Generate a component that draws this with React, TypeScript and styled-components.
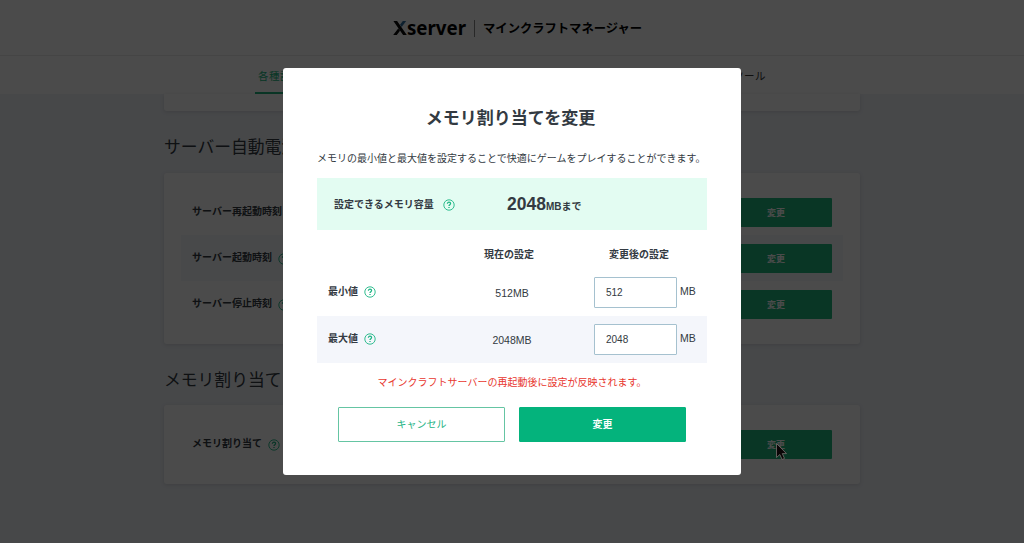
import React from "react";
import styled, { createGlobalStyle } from "styled-components";

const GlobalStyle = createGlobalStyle`
  *, *::before, *::after { box-sizing: border-box; }
  html, body { margin: 0; height: 100%; overflow: hidden; }
  body {
    font-family: "Liberation Sans", "Noto Sans CJK JP", sans-serif;
    font-size: 10px;
    color: #333a42;
    background: #f0f3f8;
  }
  h1, h2, p { margin: 0; }
`;

const Page = styled.div`
  height: 543px;
  overflow: hidden;
  display: flex;
  flex-direction: column;
`;

const Header = styled.header`
  flex: none;
  height: 56px;
  display: flex;
  align-items: center;
  justify-content: center;
  background: #fff;
  border-bottom: 1px solid #e9e9e9;
  color: #000;
`;

const Brand = styled.div`
  display: flex;
  align-items: center;
  margin: 1px 0 0 11px;
`;

const BrandName = styled.span`
  display: flex;
  align-items: center;
  font: bold 18.7px/20px "Noto Sans", sans-serif;
`;

const BrandProduct = styled.span`
  margin-left: 8px;
  padding-left: 8px;
  border-left: 1px solid #888;
  font: 700 12.3px/17px "Noto Sans CJK JP", sans-serif;
  white-space: nowrap;
`;

const Nav = styled.nav`
  flex: none;
  height: 38px;
  background: #fff;
  display: flex;
  justify-content: space-between;
  padding: 0 255px 0 255px;
`;

const Tab = styled.a<{ $active?: boolean }>`
  padding: 0 3px;
  line-height: 40px;
  height: 38px;
  font-size: 10.5px;
  letter-spacing: 0.5px;
  color: ${(p) => (p.$active ? "#21b77f" : "#333")};
  border-bottom: 2px solid ${(p) => (p.$active ? "#21b77f" : "transparent")};
`;

const Main = styled.main`
  width: 696px;
  margin-left: 164px;
`;

const Heading = styled.h2<{ $height: number }>`
  height: ${(p) => p.$height}px;
  padding-top: 25px;
  font-size: 16.8px;
  font-weight: 400;
  line-height: 24px;
`;

const Card = styled.section`
  padding: 16px 17px 17px;
  background: #fff;
  border-radius: 3px;
  box-shadow: 0 1px 4px rgba(0, 0, 0, 0.12);
`;

const ScrolledCard = styled(Card)`
  height: 17px;
  padding: 0;
  border-radius: 0 0 3px 3px;
`;

const SettingRow = styled.div<{ $shaded?: boolean }>`
  height: 46px;
  padding: 0 11px;
  display: flex;
  align-items: center;
  justify-content: space-between;
  background: ${(p) => (p.$shaded ? "#f3f6fb" : "transparent")};
`;

const Label = styled.span<{ $gap?: number }>`
  display: inline-flex;
  align-items: center;
  gap: ${(p) => p.$gap ?? 6}px;
  font-weight: 700;
  line-height: 14px;
  svg { margin-top: 1px; }
`;

const RowButton = styled.button`
  width: 112px;
  height: 29px;
  padding: 0;
  border: 0;
  border-radius: 1px;
  background: #1fb77f;
  color: #fff;
  font: 700 9px/29px "Noto Sans CJK JP", sans-serif;
`;

const Overlay = styled.div`
  position: fixed;
  inset: 0;
  display: flex;
  justify-content: center;
  background: rgba(0, 0, 0, 0.705);
`;

const Dialog = styled.div`
  width: 458px;
  height: 407px;
  margin-top: 68px;
  padding: 39px 34px 0;
  border-radius: 3px;
  background: #fff;
  display: flex;
  flex-direction: column;
`;

const DialogTitle = styled.h1`
  margin-left: -3px;
  font-size: 17px;
  line-height: 24px;
  text-align: center;
`;

const Lead = styled.p`
  margin-top: 21px;
  height: 26px;
  line-height: 14px;
  white-space: nowrap;
`;

const Capacity = styled.div`
  height: 52px;
  padding: 2px 17px 0;
  display: grid;
  grid-template-columns: 173px 1fr;
  align-items: center;
  background: #e3fcf2;
  svg { margin-top: 0; }
`;

const Amount = styled.strong`
  line-height: 20px;
  white-space: nowrap;
  b { font-size: 17.5px; }
`;

const TableHead = styled.div`
  height: 39px;
  padding: 10px 4px 0 11px;
  display: grid;
  grid-template-columns: 115px 132px 1fr;
  align-items: center;
`;

const TableRow = styled.div<{ $shaded?: boolean }>`
  height: 47px;
  padding-left: 11px;
  display: grid;
  grid-template-columns: 118px 132px 1fr;
  align-items: center;
  background: ${(p) => (p.$shaded ? "#f4f6fb" : "transparent")};
  ${Label} { margin-bottom: 2px; }
`;

const Cell = styled.span<{ $head?: boolean }>`
  text-align: center;
  font-size: ${(p) => (p.$head ? "10px" : "10.5px")};
  font-weight: ${(p) => (p.$head ? 700 : 400)};
  line-height: 14px;
`;

const Field = styled.label`
  display: flex;
  align-items: center;
  gap: 3px;
  padding-left: 16px;
  font-size: 10.5px;
`;

const Unit = styled.span`
  margin-bottom: 3px;
`;

const Input = styled.input`
  width: 83px;
  height: 31px;
  padding: 0 11px;
  border: 1px solid #a5c1cf;
  border-radius: 1px;
  background: #fff;
  color: inherit;
  font: 10px "Liberation Sans", sans-serif;
`;

const Notice = styled.p`
  margin-top: 13px;
  line-height: 14px;
  text-align: center;
  white-space: nowrap;
  color: #e8372e;
`;

const Actions = styled.div`
  margin-top: 17px;
  display: flex;
  justify-content: center;
  gap: 14px;
`;

const ActionButton = styled.button<{ $primary?: boolean }>`
  width: 167px;
  height: 35px;
  padding: 0 0 2px;
  border: 1px solid ${(p) => (p.$primary ? "#04b37c" : "#65c5a3")};
  border-radius: 1px;
  background: ${(p) => (p.$primary ? "#04b37c" : "#fff")};
  color: ${(p) => (p.$primary ? "#fff" : "#24b384")};
  font: ${(p) => (p.$primary ? 700 : 400)} 10px/31px "Noto Sans CJK JP", sans-serif;
`;

const Pointer = styled.svg`
  position: fixed;
  left: 775px;
  top: 442px;
`;

const Help = () => (
  <svg width="12" height="12" viewBox="0 0 12 12" fill="none" stroke="#1bb583">
    <circle cx="6" cy="6" r="5.2" strokeWidth="0.9" />
    <path d="M4.4 4.8C4.4 3.8 5.1 3.2 6 3.2s1.6.6 1.6 1.4C7.6 5.7 6 5.7 6 7" strokeWidth="1.25" />
    <path d="M6 7.9v1.2" strokeWidth="1.3" />
  </svg>
);

const times = [
  { label: "サーバー再起動時刻" },
  { label: "サーバー起動時刻", shaded: true },
  { label: "サーバー停止時刻" },
];

const limits = [
  { label: "最小値", value: "512" },
  { label: "最大値", value: "2048", shaded: true },
];

export default function App() {
  return (
    <>
      <GlobalStyle />
      <Page>
        <Header>
          <Brand>
            <BrandName>
              <svg width="14" height="14" viewBox="0 0 14 14">
                <path d="M0.4 0h3.7l9.7 14h-3.7Z M5.2 7.4 0.2 14h3.6l3.2-4.2Z" fill="#080808" />
                <path d="M9.8 0h3.4L8.7 6.1 7 3.8Z" fill="#326d9c" />
              </svg>
              server
            </BrandName>
            <BrandProduct>マインクラフトマネージャー</BrandProduct>
          </Brand>
        </Header>
        <Nav>
          <Tab $active>各種設定</Tab>
          <Tab>ツール</Tab>
        </Nav>
        <Main>
          <ScrolledCard />
          <Heading $height={62}>サーバー自動電源設定</Heading>
          <Card>
            {times.map((t) => (
              <SettingRow key={t.label} $shaded={t.shaded}>
                <Label>{t.label}<Help /></Label>
                <RowButton>変更</RowButton>
              </SettingRow>
            ))}
          </Card>
          <Heading $height={61}>メモリ割り当て</Heading>
          <Card>
            <SettingRow>
              <Label>メモリ割り当て<Help /></Label>
              <RowButton>変更</RowButton>
            </SettingRow>
          </Card>
        </Main>
      </Page>
      <Overlay>
        <Dialog role="dialog">
          <DialogTitle>メモリ割り当てを変更</DialogTitle>
          <Lead>メモリの最小値と最大値を設定することで快適にゲームをプレイすることができます。</Lead>
          <Capacity>
            <Label $gap={9}>設定できるメモリ容量<Help /></Label>
            <Amount><b>2048</b>MBまで</Amount>
          </Capacity>
          <TableHead>
            <span />
            <Cell $head>現在の設定</Cell>
            <Cell $head>変更後の設定</Cell>
          </TableHead>
          {limits.map((l) => (
            <TableRow key={l.label} $shaded={l.shaded}>
              <Label>{l.label}<Help /></Label>
              <Cell>{l.value}MB</Cell>
              <Field><Input defaultValue={l.value} /><Unit>MB</Unit></Field>
            </TableRow>
          ))}
          <Notice>マインクラフトサーバーの再起動後に設定が反映されます。</Notice>
          <Actions>
            <ActionButton>キャンセル</ActionButton>
            <ActionButton $primary>変更</ActionButton>
          </Actions>
        </Dialog>
      </Overlay>
      <Pointer width="13" height="19" viewBox="0 0 13 19">
        <path d="M1.5 1.5v14l3.3-3 2.3 5 2.4-1.1-2.2-4.8h4.2Z" fill="#0a0506" stroke="#77706f" strokeWidth="0.8" />
      </Pointer>
    </>
  );
}
